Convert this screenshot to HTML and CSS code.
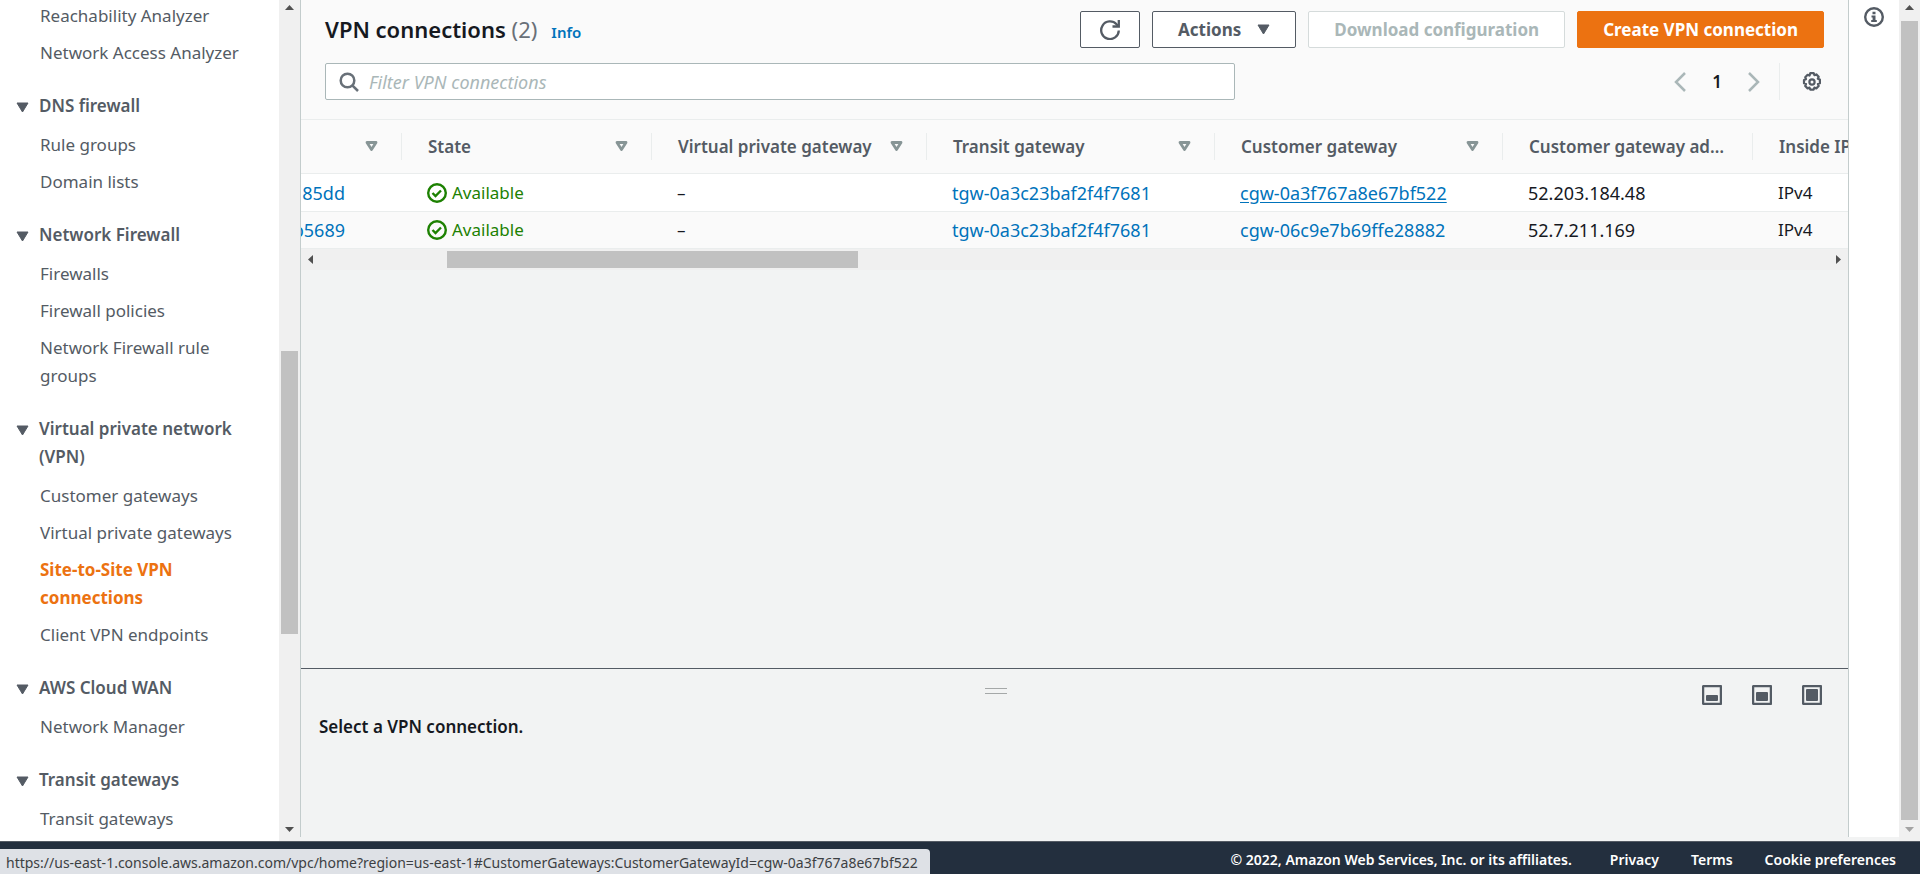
FILE: index.html
```html
<!DOCTYPE html>
<html lang="en">
<head>
<meta charset="utf-8">
<title>VPN connections</title>
<link rel="stylesheet" href="styles.css">
</head>
<body>
<svg class="defs" aria-hidden="true">
  <symbol id="caret" viewBox="0 0 13 11"><path d="M1 1h11L6.500 10z" fill="currentColor" stroke="currentColor" stroke-linejoin="round"/></symbol>
  <symbol id="sort" viewBox="0 0 13 11"><path d="M2 1.500h9L6.500 8.500z" fill="none" stroke="currentColor" stroke-width="2.800" stroke-linejoin="round"/></symbol>
  <symbol id="check" viewBox="0 0 20 20"><g fill="none" stroke="currentColor" stroke-width="2.400"><circle cx="10" cy="10" r="8.800"/><path d="M5.500 10l3 3 5.500-5.500"/></g></symbol>
  <symbol id="arrow" viewBox="0 0 9 5"><path d="M0 5L4.500 0 9 5z" fill="currentColor"/></symbol>
</svg>
<div class="app">
  <nav class="sidebar" aria-label="VPC">
    <div class="nav-body">
      <ul>
        <li><a href="#">Reachability Analyzer</a></li>
        <li><a href="#">Network Access Analyzer</a></li>
      </ul>
      <button class="group" aria-expanded="true"><svg><use href="#caret"/></svg><span>DNS firewall</span></button>
      <ul>
        <li><a href="#">Rule groups</a></li>
        <li><a href="#">Domain lists</a></li>
      </ul>
      <button class="group" aria-expanded="true"><svg><use href="#caret"/></svg><span>Network Firewall</span></button>
      <ul>
        <li><a href="#">Firewalls</a></li>
        <li><a href="#">Firewall policies</a></li>
        <li><a href="#">Network Firewall rule groups</a></li>
      </ul>
      <button class="group" aria-expanded="true"><svg><use href="#caret"/></svg><span>Virtual private network (VPN)</span></button>
      <ul>
        <li><a href="#">Customer gateways</a></li>
        <li><a href="#">Virtual private gateways</a></li>
        <li><a href="#" class="current" aria-current="page">Site-to-Site VPN connections</a></li>
        <li><a href="#">Client VPN endpoints</a></li>
      </ul>
      <button class="group" aria-expanded="true"><svg><use href="#caret"/></svg><span>AWS Cloud WAN</span></button>
      <ul>
        <li><a href="#">Network Manager</a></li>
      </ul>
      <button class="group" aria-expanded="true"><svg><use href="#caret"/></svg><span>Transit gateways</span></button>
      <ul>
        <li><a href="#">Transit gateways</a></li>
      </ul>
    </div>
    <div class="vbar">
      <svg class="arr"><use href="#arrow"/></svg>
      <div class="track"><div class="before"></div><div class="thumb"></div><div class="after"></div></div>
      <svg class="arr down"><use href="#arrow"/></svg>
    </div>
  </nav>

  <main class="main">
    <section class="list">
      <header class="toolbar">
        <div class="row">
          <div class="title"><h1>VPN connections <span class="count">(2)</span></h1><a href="#">Info</a></div>
          <div class="actions">
            <button class="btn icon" aria-label="Refresh"><svg viewBox="0 0 20 20"><g fill="none" stroke="currentColor" stroke-width="2.300"><path d="M18.800 10.500A8.800 8.800 0 1 1 16.500 4.300L18 6"/><path d="M18.800 0v6.500H12.500"/></g></svg></button>
            <button class="btn">Actions<svg class="caret"><use href="#caret"/></svg></button>
            <button class="btn" disabled>Download configuration</button>
            <button class="btn primary">Create VPN connection</button>
          </div>
        </div>
        <div class="row">
          <label class="search">
            <svg viewBox="0 0 20 20" aria-hidden="true"><g fill="none" stroke="currentColor" stroke-width="2.500"><circle cx="8.500" cy="8.500" r="6.800"/><path d="M13.300 13.300L19 19"/></g></svg>
            <input type="text" aria-label="Filter VPN connections" placeholder="Filter VPN connections">
          </label>
          <div class="pager">
            <button class="page" aria-label="Previous page"><svg viewBox="0 0 12 20"><path d="M11 1L2 10l9 9" fill="none" stroke="currentColor" stroke-width="2.500"/></svg></button>
            <span class="num">1</span>
            <button class="page" aria-label="Next page"><svg viewBox="0 0 12 20"><path d="M1 1l9 9-9 9" fill="none" stroke="currentColor" stroke-width="2.500"/></svg></button>
            <button class="gear" aria-label="Settings"><svg viewBox="0 0 20 20"><g fill="none" stroke="currentColor" stroke-width="2.200" stroke-linejoin="round"><path d="M8.300 1.200h3.400l.7 2 1.900-.8 2.400 2.400-.9 1.900 2.100.8v3.800l-2 .8.8 1.900-2.400 2.400-1.900-.8-.8 2H8.300l-.8-2-1.900.8-2.400-2.400.8-1.900-2-.8V8l2-.8-.8-2 2.400-2.400 1.900.8z"/><circle cx="10" cy="10" r="2.600"/></g></svg></button>
          </div>
        </div>
      </header>
      <div class="scroller">
        <table>
          <colgroup><col class="c-id"><col class="c-m"><col class="c-vpg"><col class="c-l"><col class="c-l"><col class="c-m"><col class="c-m"></colgroup>
          <thead>
            <tr>
              <th><div class="th"><span></span><svg><use href="#sort"/></svg></div></th>
              <th><div class="th"><span>State</span><svg><use href="#sort"/></svg></div></th>
              <th><div class="th"><span>Virtual private gateway</span><svg><use href="#sort"/></svg></div></th>
              <th><div class="th"><span>Transit gateway</span><svg><use href="#sort"/></svg></div></th>
              <th><div class="th"><span>Customer gateway</span><svg><use href="#sort"/></svg></div></th>
              <th><div class="th"><span>Customer gateway ad…</span></div></th>
              <th><div class="th"><span>Inside IP version</span></div></th>
            </tr>
          </thead>
          <tbody>
            <tr>
              <td class="id"><a href="#">185dd</a></td>
              <td><span class="ok"><svg><use href="#check"/></svg>Available</span></td>
              <td>–</td>
              <td class="code"><a href="#">tgw-0a3c23baf2f4f7681</a></td>
              <td class="code"><a href="#" class="hovered">cgw-0a3f767a8e67bf522</a></td>
              <td class="code">52.203.184.48</td>
              <td>IPv4</td>
            </tr>
            <tr>
              <td class="id"><a href="#">b5689</a></td>
              <td><span class="ok"><svg><use href="#check"/></svg>Available</span></td>
              <td>–</td>
              <td class="code"><a href="#">tgw-0a3c23baf2f4f7681</a></td>
              <td class="code"><a href="#">cgw-06c9e7b69ffe28882</a></td>
              <td class="code">52.7.211.169</td>
              <td>IPv4</td>
            </tr>
          </tbody>
        </table>
      </div>
      <div class="hbar">
        <svg class="arr left"><use href="#arrow"/></svg>
        <div class="track"><div class="before"></div><div class="thumb"></div><div class="after"></div></div>
        <svg class="arr right"><use href="#arrow"/></svg>
      </div>
    </section>
    <section class="split">
      <div class="split-bar">
        <div class="grip-area"><div class="grip"></div></div>
        <div class="sizes">
          <button aria-label="Small panel"><svg viewBox="0 0 20 20"><rect x="1" y="1" width="18" height="18" rx="1" fill="none" stroke="currentColor" stroke-width="2.500"/><rect x="4" y="10" width="12" height="6" rx="1" fill="currentColor"/></svg></button>
          <button aria-label="Medium panel"><svg viewBox="0 0 20 20"><rect x="1" y="1" width="18" height="18" rx="1" fill="none" stroke="currentColor" stroke-width="2.500"/><rect x="4" y="7" width="12" height="9" rx="1" fill="currentColor"/></svg></button>
          <button aria-label="Full panel"><svg viewBox="0 0 20 20"><rect x="1" y="1" width="18" height="18" rx="1" fill="none" stroke="currentColor" stroke-width="2.500"/><rect x="4" y="4" width="12" height="12" rx="1" fill="currentColor"/></svg></button>
        </div>
      </div>
      <h2>Select a VPN connection.</h2>
    </section>
  </main>

  <aside class="help">
    <button aria-label="Info"><svg viewBox="0 0 20 20"><circle cx="10" cy="10" r="8.800" fill="none" stroke="currentColor" stroke-width="2.400"/><path d="M8.500 4.800h3v2.400h-3zM7.500 8.500h4v4.500h1.300v2H7.200v-2h1.400v-2.500H7.500z" fill="currentColor"/></svg></button>
  </aside>
  <div class="vbar page-bar">
    <svg class="arr"><use href="#arrow"/></svg>
    <div class="track"><div class="thumb"></div></div>
    <svg class="arr down"><use href="#arrow"/></svg>
  </div>
</div>
<footer class="footer">
  <span>© 2022, Amazon Web Services, Inc. or its affiliates.</span>
  <a href="#">Privacy</a>
  <a href="#">Terms</a>
  <a href="#">Cookie preferences</a>
</footer>
<div class="status">https://us-east-1.console.aws.amazon.com/vpc/home?region=us-east-1#CustomerGateways:CustomerGatewayId=cgw-0a3f767a8e67bf522</div>
</body>
</html>
```
FILE: styles.css
```css
* { box-sizing: border-box; }
body {
  margin: 0;
  height: 100vh;
  display: flex;
  flex-direction: column;
  overflow: hidden;
  font: 17px/28px "Noto Sans", sans-serif;
  color: #16191f;
  background: #f2f3f3;
}
svg { display: block; flex: none; }
.defs { position: absolute; width: 0; height: 0; }
a { color: #0073bb; text-decoration: none; }
button { font: inherit; color: #545b64; background: none; border: 0; padding: 0; }
h1, h2, ul { margin: 0; padding: 0; }

.app { flex: 1; min-height: 0; display: flex; }

/* sidebar */
.sidebar { width: 300px; flex: none; display: flex; background: #fff; }
.nav-body { flex: 1; overflow: hidden; padding: 2px 24px 0 16px; }
.nav-body ul { list-style: none; display: flex; flex-direction: column; gap: 9px; padding-left: 24px; }
.nav-body a { display: block; color: #545b64; }
.nav-body a.current { color: #ec7211; font-weight: 700; }
.group {
  display: flex;
  gap: 10px;
  margin: 25px 0 11px;
  font-weight: 600;
  text-align: left;
}
.group svg { width: 13px; height: 11px; margin-top: 10px; }

/* scrollbars */
.vbar {
  width: 21px;
  flex: none;
  display: flex;
  flex-direction: column;
  align-items: center;
  background: #f0f0f0;
  color: #505050;
  padding: 5px 0 9px;
}
.arr { width: 9px; height: 5px; }
.arr.down { transform: rotate(180deg); }
.arr.left { transform: rotate(-90deg); }
.arr.right { transform: rotate(90deg); }
.track { flex: 1; display: flex; align-self: stretch; }
.thumb { background: #c1c1c1; }
.vbar .track { flex-direction: column; padding: 11px 2px 7px; }
.vbar .before { flex: 330; }
.vbar .thumb { flex: 283; }
.vbar .after { flex: 186; }
.page-bar .down { color: #a3a3a3; }
.hbar {
  height: 21px;
  display: flex;
  align-items: center;
  background: #f0f0f0;
  color: #505050;
  padding: 0 5px;
}
.hbar .track { align-items: center; padding: 0 8px; }
.hbar .thumb { height: 17px; flex: 411; }
.hbar .before { flex: 124; }
.hbar .after { flex: 968; }

/* main */
.main {
  flex: 1;
  min-width: 0;
  display: flex;
  flex-direction: column;
  border: solid #c3cccc;
  border-width: 0 1px;
  margin-bottom: 4px;
}
.list { flex: 1; min-height: 0; }
.toolbar {
  display: flex;
  flex-direction: column;
  gap: 15px;
  padding: 11px 24px 19px;
  background: #fafafa;
  border-bottom: 1px solid #eaeded;
}
.row { display: flex; justify-content: space-between; align-items: flex-start; }
.title { display: flex; align-items: baseline; gap: 14px; }
.title h1 { font-size: 22px; font-weight: 600; line-height: 36px; }
.title a { font-size: 15px; font-weight: 600; line-height: 24px; }
.count { font-weight: 400; color: #687078; }
.actions { display: flex; gap: 12px; }
.btn {
  display: flex;
  align-items: center;
  gap: 16px;
  height: 37px;
  padding: 0 25px;
  font-size: 17px;
  font-weight: 700;
  background: #fff;
  border: 1px solid #545b64;
  border-radius: 2px;
}
.btn.icon { padding: 0 19px; }
.btn.icon svg { width: 20px; height: 20px; }
.btn .caret { width: 13px; height: 11px; }
.btn:disabled { color: #aab7b8; border-color: #d5dbdb; }
.btn.primary { background: #ec7211; border-color: #ec7211; color: #fff; }
.search {
  display: flex;
  align-items: center;
  gap: 10px;
  width: 910px;
  height: 37px;
  padding: 0 13px;
  background: #fff;
  border: 1px solid #aab7b8;
  border-radius: 2px;
  color: #687078;
}
.search svg { width: 20px; height: 20px; }
.search input { flex: 1; min-width: 0; border: 0; outline: 0; padding: 0; font: inherit; font-size: 18px; background: none; }
.search input::placeholder { color: #aab7b8; font-style: italic; opacity: 1; }
.pager { display: flex; align-items: center; height: 37px; }
.page { color: #aab7b8; }
.page svg { width: 12px; height: 20px; }
.num { width: 62px; text-align: center; font-weight: 600; }
.gear {
  height: 37px;
  margin-left: 19px;
  padding: 0 2px 0 22px;
  border-left: 1px solid #eaeded;
}
.gear svg { width: 20px; height: 20px; }

/* table */
.scroller { overflow: hidden; border-bottom: 1px solid #eaeded; }
table { width: 1702px; table-layout: fixed; border-collapse: separate; border-spacing: 0; background: #fff; }
.c-id { width: 101px; }
.c-m { width: 250px; }
.c-vpg { width: 275px; }
.c-l { width: 288px; }
th { padding: 0; height: 53px; background: #fafafa; text-align: left; font-weight: 600; color: #545b64; }
.th {
  display: flex;
  align-items: center;
  justify-content: space-between;
  height: 27px;
  padding: 0 23px 0 26px;
  border-right: 1px solid #eaeded;
  white-space: nowrap;
}
.th svg { width: 13px; height: 11px; color: #879596; }
td { padding: 0 0 0 25px; height: 38px; border-top: 1px solid #eaeded; white-space: nowrap; }
tbody tr:nth-child(2) { background: #fafafa; }
tbody tr:nth-child(2) td { height: 37px; }
td.code { font-size: 18px; }
td.id { padding: 0 57px 0 0; direction: rtl; font-size: 18px; }
.hovered { text-decoration: underline; text-underline-offset: 2px; }
.ok { display: flex; align-items: center; gap: 5px; color: #1d8102; }
.ok svg { width: 20px; height: 20px; }

/* split panel */
.split { height: 169px; border-top: 1px solid #545b64; padding: 16px 24px 0 18px; }
.split-bar { display: flex; gap: 29px; height: 28px; }
.grip-area { flex: 1; display: flex; justify-content: center; padding-top: 3px; }
.grip { width: 22px; height: 6px; border: solid #a5a8a8; border-width: 1px 0; }
.sizes { display: flex; gap: 30px; align-items: flex-start; padding-right: 2px; }
.sizes svg { width: 20px; height: 20px; }
.split h2 { font-size: 17px; font-weight: 600; line-height: 28px; }

.help { width: 50px; flex: none; background: #fff; padding: 7px 0 0 15px; margin-bottom: 4px; }
.help svg { width: 20px; height: 20px; }

.footer {
  height: 33px;
  flex: none;
  display: flex;
  justify-content: flex-end;
  align-items: center;
  gap: 32px;
  padding: 4px 24px 0;
  background: #232f3e;
  border-top: 1px solid #545b64;
  color: #fff;
  font-size: 14px;
  font-weight: 600;
}
.footer span { margin-right: 6px; }
.footer a { color: #fff; }
.status {
  position: absolute;
  left: 0;
  bottom: 0;
  height: 25px;
  padding: 2px 12px 0 6px;
  border-radius: 0 4px 0 0;
  background: #dee1e6;
  color: #3c4043;
  font-size: 14px;
  line-height: 24px;
}
```
